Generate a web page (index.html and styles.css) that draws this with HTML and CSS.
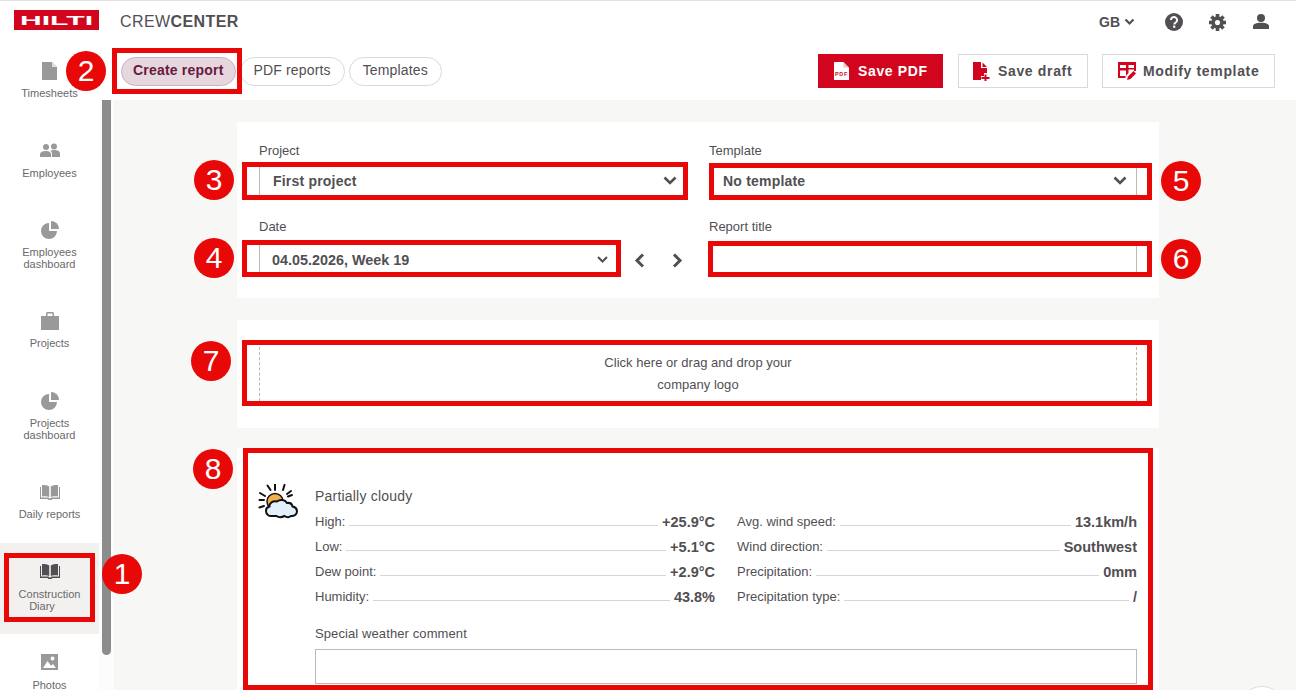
FILE: index.html
```html
<!DOCTYPE html>
<html lang="en">
<head>
<meta charset="utf-8">
<title>Crew Center</title>
<link rel="stylesheet" href="styles.css">
</head>
<body>
<div class="app">
  <header class="topbar">
    <div class="brand">
      <svg class="logo" viewBox="0 0 85 20" width="85" height="20"><rect width="85" height="20" fill="#d2051e"/><text x="6" y="14.500" class="logo-text" textLength="73" lengthAdjust="spacingAndGlyphs">HILTI</text></svg>
      <span class="product">CREW<b>CENTER</b></span>
    </div>
    <div class="top-actions">
      <span class="lang">GB <svg width="11" height="8" viewBox="0 0 11 8"><path d="M1.500 1.500 5.500 5.500 9.500 1.500" fill="none" stroke="#524f53" stroke-width="2.200"/></svg></span>
      <svg class="top-icon" width="18" height="18" viewBox="0 0 18 18"><circle cx="9" cy="9" r="9" fill="#524f53"/><path d="M5.900 7a3.100 3 0 1 1 4.800 2.500c-1 .7-1.400 1-1.400 2" fill="none" stroke="#fff" stroke-width="2"/><rect x="8.100" y="12.600" width="2.200" height="2.200" fill="#fff"/></svg>
      <svg class="top-icon" width="17" height="17" viewBox="0 0 16 16">
        <g fill="#524f53">
          <circle cx="8" cy="8" r="5.800"/>
          <rect x="6.300" y="0" width="3.400" height="16"/>
          <rect x="6.300" y="0" width="3.400" height="16" transform="rotate(45 8 8)"/>
          <rect x="6.300" y="0" width="3.400" height="16" transform="rotate(90 8 8)"/>
          <rect x="6.300" y="0" width="3.400" height="16" transform="rotate(135 8 8)"/>
        </g>
        <circle cx="8" cy="8" r="2.400" fill="#fff"/>
      </svg>
      <svg class="top-icon top-user" width="16" height="16" viewBox="0 0 16 16"><circle cx="8" cy="4" r="4" fill="#524f53"/><path fill="#524f53" d="M0 15v-2.500C0 10 3 8.800 8 8.800s8 1.200 8 3.700V15z"/></svg>
    </div>
  </header>

  <div class="body-row">
    <nav class="sidebar">
      <a class="nav-item nav-first">
        <svg class="nav-icon" width="16" height="20" viewBox="0 0 16 20"><path fill="#9a989a" d="M0 1h10l5 5v13H0z"/><path fill="#fff" d="M10 1v5h5z" opacity=".7"/></svg>
        <span>Timesheets</span>
      </a>
      <a class="nav-item nav-people">
        <svg class="nav-icon" width="20" height="20" viewBox="0 0 20 20"><g transform="translate(0 1)"><circle cx="6" cy="6" r="3" fill="#9a989a"/><circle cx="14" cy="5.500" r="3" fill="#9a989a"/><path fill="#9a989a" d="M0 16v-2.500C0 11 3 10 6 10s5 1 5 3.500V16zM12 16v-3c0-1.500-.5-2.500-1.500-3.300 1-.5 2-.7 3.500-.7 3 0 6 1 6 3.500V16z"/></g></svg>
        <span>Employees</span>
      </a>
      <a class="nav-item">
        <svg class="nav-icon" width="20" height="20" viewBox="0 0 20 20"><path fill="#9a989a" d="M9 3a8 8 0 1 0 8 8H9z"/><path fill="#9a989a" d="M11 1a8 8 0 0 1 8 8h-8z"/></svg>
        <span>Employees<br>dashboard</span>
      </a>
      <a class="nav-item">
        <svg class="nav-icon" width="20" height="20" viewBox="0 0 20 20"><path fill="#9a989a" d="M1 5h5V2.500C6 1.700 6.700 1 7.500 1h5c.8 0 1.500.7 1.500 1.500V5h5v14H1zM7.500 5h5V2.500h-5z"/></svg>
        <span>Projects</span>
      </a>
      <a class="nav-item">
        <svg class="nav-icon" width="20" height="20" viewBox="0 0 20 20"><path fill="#9a989a" d="M9 3a8 8 0 1 0 8 8H9z"/><path fill="#9a989a" d="M11 1a8 8 0 0 1 8 8h-8z"/></svg>
        <span>Projects<br>dashboard</span>
      </a>
      <a class="nav-item nav-daily">
        <svg class="nav-icon" width="20" height="20" viewBox="0 0 20 20"><path fill="#9a989a" d="M0 5h1v10.500h7.500l1 1h1l1-1H19V5h1v12h-7.500l-1 1h-3l-1-1H0z"/><path fill="#9a989a" d="M2 3c3 0 5.500.4 7.200 1.400V15C7.500 14 5 14 2 14.500zM18 3c-3 0-5.500.4-7.200 1.400V15c1.700-1 4.200-1 7.200-.5z"/></svg>
        <span>Daily reports</span>
      </a>
      <a class="nav-item nav-active nav-wide">
        <svg class="nav-icon" width="20" height="20" viewBox="0 0 20 20"><path fill="#524f53" d="M0 5h1v10.500h7.500l1 1h1l1-1H19V5h1v12h-7.500l-1 1h-3l-1-1H0z"/><path fill="#524f53" d="M2 3c3 0 5.500.4 7.200 1.400V15C7.500 14 5 14 2 14.500zM18 3c-3 0-5.500.4-7.200 1.400V15c1.700-1 4.200-1 7.200-.5z"/></svg>
        <span>Construction<br><span class="nav-shift">Diary</span></span>
      </a>
      <a class="nav-item nav-wide">
        <svg class="nav-icon" width="17" height="16" viewBox="0 0 17 16"><path fill="#9a989a" fill-rule="evenodd" d="M0 0h17v16H0zM11.500 2.500a2 2 0 1 0 0 4 2 2 0 0 0 0-4zM2 14h13l-3-4-2 1.800L6.500 7z"/></svg>
        <span>Photos</span>
      </a>
    </nav>

    <div class="workspace">
      <div class="toolbar">
        <div class="tabs">
          <a class="tab tab-active">Create report</a>
          <a class="tab">PDF reports</a>
          <a class="tab">Templates</a>
        </div>
        <div class="buttons">
          <button class="btn btn-primary">
            <svg width="15" height="18" viewBox="0 0 15 18"><path fill="#fff" d="M0 0h9.500L15 5.500V18H0z"/><path fill="#d2051e" d="M9.500 0v5.500H15z" opacity=".25"/><text x="7.500" y="13.500" class="pdf-mini">PDF</text></svg>
            Save PDF
          </button>
          <button class="btn btn-draft">
            <svg width="17" height="19" viewBox="0 0 17 19"><path fill="#d2051e" d="M0 0h8v6h6v5h-3v3H8v4H0z"/><path fill="#d2051e" d="M9.500 .5l4.500 4.500H9.500z"/><path fill="#d2051e" d="M11.500 12.500h2v2.500H16.500v2h-3v2h-2v-2h-3v-2h3z"/></svg>
            Save draft
          </button>
          <button class="btn btn-modify">
            <svg width="19" height="19" viewBox="0 0 19 19"><path fill="#d2051e" fill-rule="evenodd" d="M0 0h18v9h-2V7.500h-5.500V11l-3 3.500V16H0zM2 3v3h6V3zM10.500 3v3H16V3zM2 8.500V14h6V8.500z"/><path fill="#d2051e" d="M9 18l1-3.500 5.500-5.500 2.500 2.500-5.500 5.500z"/></svg>
            Modify template
          </button>
        </div>
      </div>

      <div class="lower">
        <div class="gutter"><div class="thumb"></div></div>
        <main class="content">
          <section class="card card-form">
            <div class="form-row">
              <div class="field">
                <label class="label">Project</label>
                <div class="select select-left"><span class="select-text">First project</span>
                  <svg width="14" height="9" viewBox="0 0 14 9"><path d="M1.500 1.500 7 7l5.500-5.500" fill="none" stroke="#524f53" stroke-width="2.600"/></svg></div>
              </div>
              <div class="field">
                <label class="label">Template</label>
                <div class="select select-right"><span class="select-text">No template</span>
                  <svg width="14" height="9" viewBox="0 0 14 9"><path d="M1.500 1.500 7 7l5.500-5.500" fill="none" stroke="#524f53" stroke-width="2.600"/></svg></div>
              </div>
            </div>
            <div class="form-row">
              <div class="field">
                <label class="label">Date</label>
                <div class="date-row">
                  <div class="select select-left select-date"><span class="select-text">04.05.2026, Week 19</span>
                    <svg width="11" height="7" viewBox="0 0 11 7"><path d="M1 1l4.500 4.500L10 1" fill="none" stroke="#524f53" stroke-width="2"/></svg></div>
                  <div class="date-nav">
                    <svg width="11" height="15" viewBox="0 0 11 15"><path d="M9 1.500 3 7.500l6 6" fill="none" stroke="#524f53" stroke-width="3"/></svg>
                    <svg width="11" height="15" viewBox="0 0 11 15"><path d="M2 1.500 8 7.500l-6 6" fill="none" stroke="#524f53" stroke-width="3"/></svg>
                  </div>
                </div>
              </div>
              <div class="field">
                <label class="label">Report title</label>
                <div class="select select-right select-input"></div>
              </div>
            </div>
          </section>

          <section class="card card-logo">
            <div class="dropzone">Click here or drag and drop your<br>company logo</div>
          </section>

          <section class="card card-weather">
            <div class="weather">
              <svg class="weather-icon" width="41" height="36" viewBox="0 0 41 36">
                <g stroke="#111" stroke-width="2" stroke-linecap="round" fill="none">
                  <path d="M2 9 7 12M1.500 16H6M1.500 23.500 6 22M9.500 1.500 12.500 6M17 .5V6M26.500 1 25 6M29 10 33 7M30 12.500 34 11"/>
                </g>
                <circle cx="17" cy="17.500" r="8" fill="#f2b14a" stroke="#111" stroke-width="1.500"/>
                <path d="M14 32c-3 .5-6-1.500-6-5 0-2.500 1.500-4 3.500-4.500C11 19 15 16.500 19 17.500c3-2.500 8-2 10 1.500 3-.5 5 1 5.500 3.500 2.500 .5 4.500 2.500 4.500 5 0 3-3 5-6 4.500-2 1.500-5 1-6.500 0-3 1.500-6 1.500-8 0z" fill="#e3f0fb" stroke="#111" stroke-width="2"/>
              </svg>
              <div class="weather-body">
                <div class="weather-title">Partially cloudy</div>
                <div class="weather-grid">
                  <div class="stat"><span>High:</span><i></i><b>+25.9°C</b></div>
                  <div class="stat"><span>Avg. wind speed:</span><i></i><b>13.1km/h</b></div>
                  <div class="stat"><span>Low:</span><i></i><b>+5.1°C</b></div>
                  <div class="stat"><span>Wind direction:</span><i></i><b>Southwest</b></div>
                  <div class="stat"><span>Dew point:</span><i></i><b>+2.9°C</b></div>
                  <div class="stat"><span>Precipitation:</span><i></i><b>0mm</b></div>
                  <div class="stat"><span>Humidity:</span><i></i><b>43.8%</b></div>
                  <div class="stat"><span>Precipitation type:</span><i></i><b>/</b></div>
                </div>
                <label class="label comment-label">Special weather comment</label>
                <div class="comment-box"></div>
              </div>
            </div>
          </section>
        </main>
      </div>
    </div>
  </div>

  <div class="mark box-1"></div>
  <div class="mark box-2"></div>
  <div class="mark box-3"></div>
  <div class="mark box-4"></div>
  <div class="mark box-5"></div>
  <div class="mark box-6"></div>
  <div class="mark box-7"></div>
  <div class="mark box-8"></div>
  <div class="badge badge-1">1</div>
  <div class="badge badge-2">2</div>
  <div class="badge badge-3">3</div>
  <div class="badge badge-4">4</div>
  <div class="badge badge-5">5</div>
  <div class="badge badge-6">6</div>
  <div class="badge badge-7">7</div>
  <div class="badge badge-8">8</div>
  <div class="chat-fab"></div>
</div>
</body>
</html>
```

FILE: styles.css
```css
* { box-sizing: border-box; }
html, body { margin: 0; padding: 0; height: 690px; overflow: hidden; background: #fff; }
body { font-family: "Liberation Sans", Arial, sans-serif; color: #524f53; }
.app { position: relative; width: 1296px; height: 690px; overflow: hidden; }

/* top bar */
.topbar { height: 46px; border-top: 1px solid #e2e2e2; display: flex; justify-content: space-between; align-items: flex-start; }
.brand { display: flex; align-items: flex-start; padding: 9px 0 0 14px; }
.logo { display: block; }
.logo-text { font: 700 13px "Liberation Sans", Arial, sans-serif; fill: #fff; }
.product { margin: 3px 0 0 21px; font-size: 16px; line-height: 18px; letter-spacing: .4px; color: #524f53; }
.product b { font-weight: 700; }
.top-actions { display: flex; align-items: center; gap: 26px; padding: 12px 27px 0 0; height: 30px; }
.lang { display: flex; align-items: center; gap: 4px; font-size: 14px; font-weight: 700; margin-right: 4px; }
.top-icon { display: block; }
.top-user { margin-left: 1px; }

/* layout */
.body-row { display: flex; height: 644px; }
.sidebar { width: 99px; flex: none; display: flex; flex-direction: column; }
.nav-item { display: block; padding-top: 18px; height: 80px; text-align: center; font-size: 11px; line-height: 12px; color: #6b696b; flex: none; }
.nav-item span { display: block; }
.nav-item .nav-shift { display: inline-block; margin-right: 15px; }
.nav-first { height: 76px; padding-top: 15px; }
.nav-item:nth-child(3), .nav-item:nth-child(5), .nav-item:nth-child(7) { height: 91px; }
.nav-icon { display: block; margin: 0 auto 6px; height: 20px; }
.nav-people span { margin-top: 7px; }
.nav-daily { height: 79px; }
.nav-wide .nav-icon { margin-bottom: 7px; }
.nav-active { background: #f2f1f0; }

.workspace { flex: 1; min-width: 0; display: flex; flex-direction: column; }
.toolbar { height: 54px; display: flex; justify-content: space-between; padding: 8px 21px 0 22px; }
.tabs { display: flex; gap: 4px; padding-top: 3px; }
.tab { height: 29px; padding: 0 13px; line-height: 25px; border: 1px solid #d9d9d9; border-radius: 15px; font-size: 14px; background: #fff; letter-spacing: .15px; }
.tab-active { background: #e6d7df; border-color: #cdb0bf; color: #671a3d; font-weight: 700; padding: 0 11px; letter-spacing: .2px; }
.buttons { display: flex; }
.btn { height: 34px; display: flex; align-items: center; border: 1px solid #d9d9d9; background: #fff; font: 700 14px "Liberation Sans", Arial, sans-serif; letter-spacing: .65px; color: #524f53; }
.btn-primary { width: 125px; padding: 0 0 0 15px; gap: 9px; background: #d2051e; border-color: #d2051e; color: #fff; }
.btn-draft { width: 130px; padding: 0 0 0 14px; gap: 8px; margin-left: 15px; }
.btn-modify { width: 173px; padding: 0 0 0 15px; gap: 6px; margin-left: 14px; }
.pdf-mini { font: 700 5.500px "Liberation Sans", Arial, sans-serif; fill: #d2051e; text-anchor: middle; }

.lower { flex: 1; min-height: 0; display: flex; }
.gutter { width: 15px; flex: none; padding-left: 3px; background: #fcfcfc; }
.thumb { width: 9px; height: 555px; background: #8c8c8c; border-radius: 0 0 5px 5px; }
.content { flex: 1; min-width: 0; background: #f7f7f5; padding: 22px 137px 0 123px; }
.card { background: #fff; padding: 0 22px; }

/* form card */
.card-form { height: 176px; padding-top: 21px; }
.form-row { display: flex; gap: 23px; height: 76px; }
.field { width: 427px; }
.field + .field { width: 428px; }
.label { display: block; font-size: 13px; line-height: 16px; color: #524f53; }
.select { display: flex; align-items: center; justify-content: space-between; height: 31px; margin-top: 6px; border: 0 solid #bbb; }
.select-text { font-size: 14px; font-weight: 700; letter-spacing: .2px; }
.select-left { border-left-width: 1px; padding: 0 9px 0 13px; }
.select-right { border-right-width: 1px; padding: 0 9px 0 14px; }
.date-row { display: flex; align-items: center; }
.select-date { width: 357px; padding: 0 8px 0 12px; margin-top: 9px; flex: none; }
.date-row .select-text { font-size: 14.400px; letter-spacing: 0; }
.date-nav { display: flex; gap: 27px; padding: 11px 0 0 18px; }
.date-nav svg { display: block; }
.select-input { margin-top: 9px; }

/* logo card */
.card-logo { height: 108px; margin-top: 22px; padding-top: 27px; }
.dropzone { height: 54px; border: 0 dashed #b5b5b5; border-width: 0 1px; text-align: center; font-size: 13px; line-height: 22px; letter-spacing: .03px; padding: 5px 0 0 0; }

/* weather card */
.card-weather { margin-top: 20px; height: 300px; padding: 0 22px 0 21px; }
.weather { display: flex; padding-top: 36px; }
.weather-icon { display: block; flex: none; margin-right: 16px; }
.weather-body { flex: 1; min-width: 0; padding-top: 4px; }
.weather-title { font-size: 14px; line-height: 16px; letter-spacing: .2px; }
.weather-grid { display: grid; grid-template-columns: 400px 400px; column-gap: 22px; margin-top: 5px; }
.stat { display: flex; align-items: center; height: 25px; font-size: 13px; }
.stat i { flex: 1; height: 1px; background: #d6d6d6; margin: 7px 4px 0 4px; }
.stat b { font-size: 14.500px; }
.comment-label { margin-top: 17px; letter-spacing: .1px; }
.comment-box { height: 35px; margin-top: 7px; border: 1px solid #bbb; }

/* annotations */
.mark { position: absolute; border: 5px solid #e90808; }
.box-1 { left: 4px; top: 553px; width: 91px; height: 69px; }
.box-2 { left: 112px; top: 48px; width: 130px; height: 46px; }
.box-3 { left: 242px; top: 162px; width: 446px; height: 38px; }
.box-4 { left: 242px; top: 240px; width: 379px; height: 37px; }
.box-5 { left: 709px; top: 163px; width: 443px; height: 37px; }
.box-6 { left: 708px; top: 241px; width: 444px; height: 36px; }
.box-7 { left: 242px; top: 340px; width: 910px; height: 66px; }
.box-8 { left: 243px; top: 448px; width: 910px; height: 242px; }
.badge { position: absolute; width: 40px; height: 40px; border-radius: 50%; background: #e90808; color: #fff; font-size: 30px; line-height: 40px; text-align: center; }
.badge-1 { left: 102px; top: 554px; }
.badge-2 { left: 66px; top: 51px; }
.badge-3 { left: 194px; top: 160px; }
.badge-4 { left: 194px; top: 238px; }
.badge-5 { left: 1161px; top: 161px; }
.badge-6 { left: 1161px; top: 239px; }
.badge-7 { left: 191px; top: 341px; }
.badge-8 { left: 193px; top: 449px; }
.chat-fab { position: absolute; left: 1238px; top: 686px; width: 48px; height: 48px; border-radius: 50%; background: #fff; border: 1px solid #ddd; }
```
